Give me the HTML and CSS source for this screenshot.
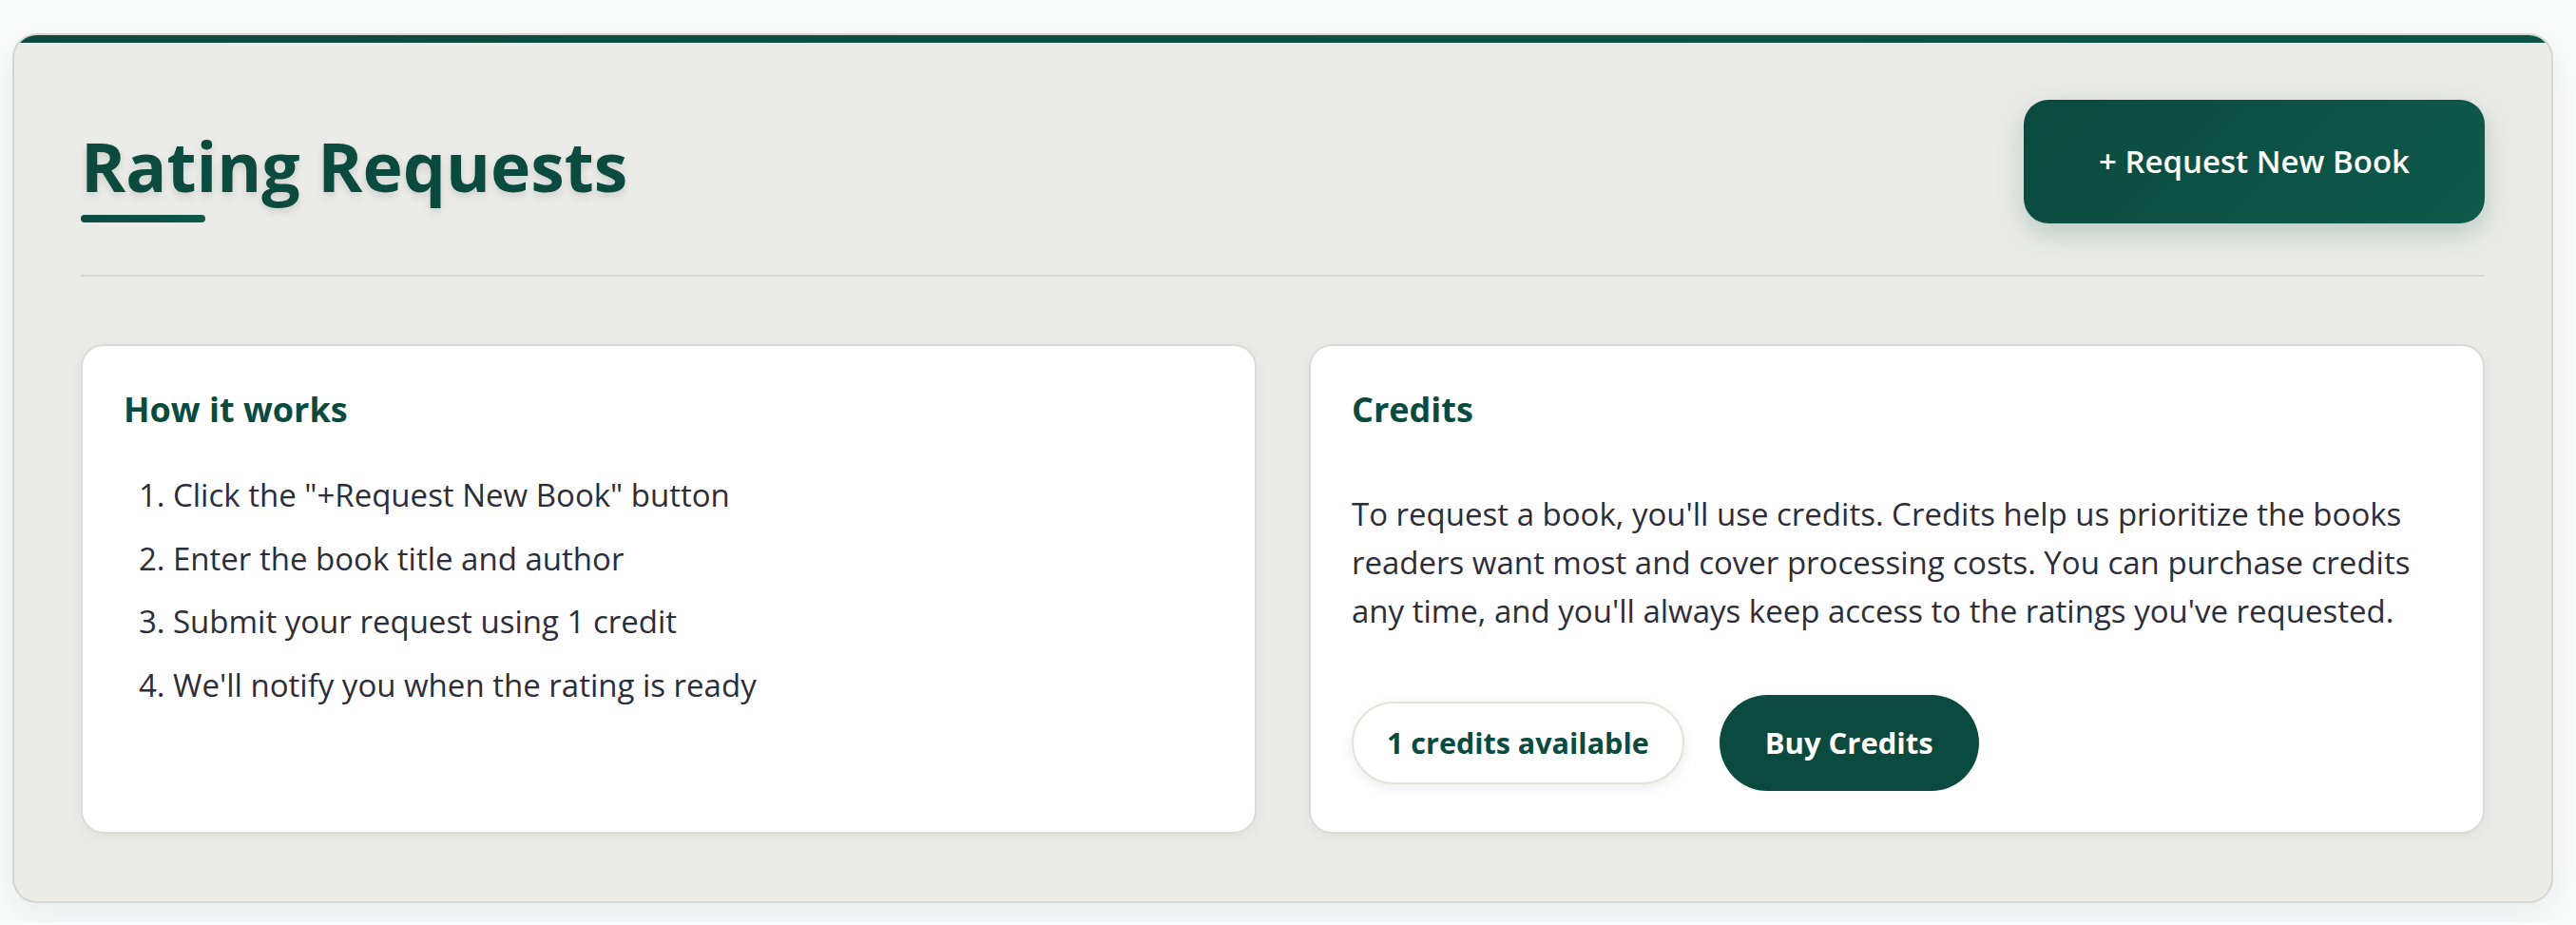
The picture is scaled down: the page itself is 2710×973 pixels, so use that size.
FILE: index.html
```html
<!DOCTYPE html>
<html lang="en">
<head>
<meta charset="utf-8">
<title>Rating Requests</title>
<link rel="stylesheet" href="styles.css">
</head>
<body>
<div class="page">
  <section class="panel">
    <header class="panel-header">
      <div class="title-block">
        <h1 class="title">Rating Requests</h1>
        <div class="title-bar"></div>
      </div>
      <button class="btn-request" type="button">+ Request New Book</button>
    </header>
    <div class="cards">
      <article class="card">
        <h2 class="card-title">How it works</h2>
        <ol class="steps">
          <li>Click the "+Request New Book" button</li>
          <li>Enter the book title and author</li>
          <li>Submit your request using 1 credit</li>
          <li>We'll notify you when the rating is ready</li>
        </ol>
      </article>
      <article class="card">
        <h2 class="card-title">Credits</h2>
        <p class="card-text">To request a book, you'll use credits. Credits help us prioritize the books readers want most and cover processing costs. You can purchase credits any time, and you'll always keep access to the ratings you've requested.</p>
        <div class="actions">
          <span class="credits-pill">1 credits available</span>
          <button class="btn-buy" type="button">Buy Credits</button>
        </div>
      </article>
    </div>
  </section>
</div>
</body>
</html>
```
FILE: styles.css
```css
* { box-sizing: border-box; }

html, body {
  margin: 0;
  padding: 0;
  background: #fafbfb;
  font-family: "Open Sans", "Noto Sans", sans-serif;
  color: #2d2d3a;
}

.page {
  padding: 35px 24px 20px 13px;
}

.panel {
  position: relative;
  overflow: hidden;
  background: #ebece7;
  border: 2px solid #d3d7d0;
  border-radius: 26px;
  padding: 68px 70px 71px 70px;
  box-shadow: 0 12px 36px rgba(30, 60, 70, 0.08);
}

.panel::before {
  content: "";
  position: absolute;
  top: 0;
  left: 0;
  right: 0;
  height: 8px;
  background: linear-gradient(90deg, #0b4a3e, #0e5547);
}

.panel-header {
  display: flex;
  justify-content: space-between;
  align-items: flex-end;
  padding-bottom: 54px;
  border-bottom: 2px solid #d3d8d2;
}

.title-block {
  display: flex;
  flex-direction: column;
  align-items: flex-start;
  margin-bottom: 1px;
}

.title {
  margin: 0;
  font-size: 71.5px;
  line-height: 86px;
  font-weight: 700;
  color: #0b4a3e;
  letter-spacing: 0;
  text-shadow: 0 4px 8px rgba(0, 0, 0, 0.12);
}

.title-bar {
  width: 131px;
  height: 8px;
  margin-top: 8px;
  border-radius: 4px;
  background: linear-gradient(90deg, #0b4a3e, #0e5a4b);
}

.btn-request {
  font-family: inherit;
  font-size: 33px;
  font-weight: 600;
  line-height: 44px;
  color: #ffffff;
  border: none;
  border-radius: 26px;
  padding: 43px 79px;
  background: linear-gradient(135deg, #0b4a3e, #0f5a4b);
  box-shadow: 0 10px 30px rgba(11, 74, 62, 0.22);
  cursor: pointer;
}

.cards {
  display: grid;
  grid-template-columns: 1fr 1fr;
  gap: 55px;
  margin-top: 71px;
}

.card {
  background: #ffffff;
  border: 2px solid #d8dcd6;
  border-radius: 24px;
  padding: 43px;
  box-shadow: 0 4px 16px rgba(0, 0, 0, 0.05);
}

.card-title {
  margin: 0;
  font-size: 36px;
  line-height: 47px;
  font-weight: 700;
  color: #0b4a3e;
}

.steps {
  margin: 41px 0 0 0;
  padding-left: 52px;
  font-size: 33px;
  line-height: 51px;
}

.steps li {
  margin-bottom: 15.5px;
}

.steps li:last-child {
  margin-bottom: 0;
}

.card-text {
  margin: 61px 0 0 0;
  font-size: 33px;
  line-height: 51px;
}

.actions {
  display: flex;
  align-items: center;
  gap: 37px;
  margin-top: 63px;
}

.credits-pill {
  display: inline-block;
  font-size: 30.5px;
  font-weight: 700;
  line-height: 43px;
  color: #0b4a3e;
  background: #ffffff;
  border: 2px solid #e2e2dc;
  border-radius: 999px;
  padding: 20px 35px;
  box-shadow: 0 4px 14px rgba(0, 0, 0, 0.08);
}

.btn-buy {
  font-family: inherit;
  font-size: 31px;
  font-weight: 700;
  line-height: 43px;
  color: #ffffff;
  background: #0b4a3e;
  border: none;
  border-radius: 999px;
  padding: 29px 48px;
  cursor: pointer;
}
```
